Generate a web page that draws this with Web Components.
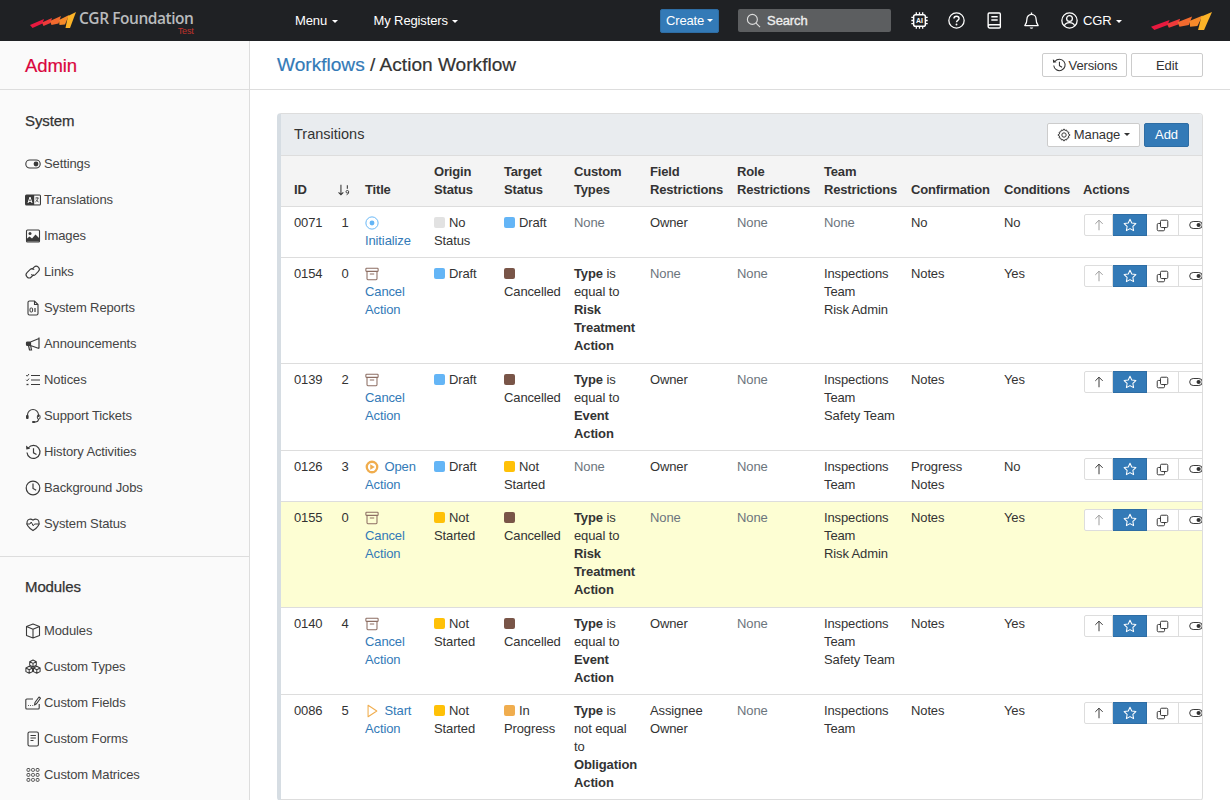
<!DOCTYPE html>
<html lang="en">
<head>
<meta charset="utf-8">
<title>Action Workflow</title>
<style>
  html, body { margin: 0; height: 100%; overflow: hidden; }
  body { font: 13px/18px "Liberation Sans", Arial, sans-serif; letter-spacing: -.12px; color: #333; background: #fff; }
  cgr-layout { height: 800px; }
</style>
</head>
<body>
<cgr-navbar></cgr-navbar>
<cgr-layout>
  <cgr-sidebar slot="side"></cgr-sidebar>
  <cgr-page-header slot="main"></cgr-page-header>
  <wf-panel slot="main" heading="Transitions">
    <wf-table></wf-table>
  </wf-panel>
</cgr-layout>

<script>
// all icons on a 16 box, drawn with currentColor
const ICONS = {
  toggle: '<rect x=".8" y="4" width="14.4" height="8" rx="4" fill="none" stroke="currentColor" stroke-width="1.1"/><circle cx="11" cy="8" r="2.4" fill="currentColor"/>',
  translate: '<rect x="0" y="2.5" width="16" height="11" rx="1.5" fill="currentColor"/><rect x="9.2" y="3.6" width="5.7" height="8.8" fill="#fafafa"/><path d="M3 11l2-6 2 6M3.8 9.4h2.4" fill="none" stroke="#fafafa" stroke-width="1"/><path d="M10.3 6h3.4M12 5v1M13 6c-.3 2-1.5 3.5-2.6 4M11 7.5c.5 1 1.3 2 2.6 2.5" fill="none" stroke="currentColor" stroke-width=".8"/>',
  image: '<rect x="1.5" y="2" width="13" height="12" rx="1" fill="none" stroke="currentColor" stroke-width="1.1"/><circle cx="5" cy="5.5" r="1.5" fill="currentColor"/><path d="M1.5 13.5V11l3-2.5 2.500 2 3.500-4 4 4v3z" fill="currentColor"/>',
  link: '<path d="M6.800 5.400l2.300-2.300a3 3 0 0 1 4.200 0l.1.1a3 3 0 0 1 0 4.200L10.500 10.300a3 3 0 0 1-4.200 0" fill="none" stroke="currentColor" stroke-width="1.1"/><path d="M9.200 5.700a3 3 0 0 0-4.200 0L2 8.700a3 3 0 0 0 0 4.200l.1.1a3 3 0 0 0 4.200 0l2.300-2.300" fill="none" stroke="currentColor" stroke-width="1.1"/>',
  report: '<path d="M4.500 1h5L13 4.500v9a1.500 1.500 0 0 1-1.500 1.500h-7A1.500 1.500 0 0 1 3 13.500v-11A1.500 1.500 0 0 1 4.500 1z" fill="none" stroke="currentColor" stroke-width="1.1"/><path d="M9.500 1v3.500H13" fill="none" stroke="currentColor" stroke-width="1.1"/><rect x="5" y="8" width="2.600" height="4" rx="1" fill="none" stroke="currentColor"/><path d="M10 8v4" stroke="currentColor" stroke-width="1.2"/>',
  megaphone: '<path d="M14 1.500v11M14 2.500L5.500 6h-3a1 1 0 0 0-1 1v1.500a1 1 0 0 0 1 1h3L14 12.500M5.500 6v3.500M3.500 9.500l1 4.500h2l-.8-4" fill="none" stroke="currentColor" stroke-width="1.2"/><rect x="2" y="6" width="3.500" height="3.500" fill="currentColor"/>',
  notices: '<path d="M6 3.500h9M6 8h9M6 12.500h9" stroke="currentColor" stroke-width="1.1"/><path d="M1.200 3.200l1 1L4 2M1.200 7.800l1 1L4 6.600" fill="none" stroke="currentColor" stroke-width="1"/><path d="M1.500 12.500h2" stroke="currentColor" stroke-width="1.3"/>',
  headset: '<path d="M2.500 9V7a5.500 5.500 0 0 1 11 0v2M13.500 11c0 1.800-1.500 3-3.500 3" fill="none" stroke="currentColor" stroke-width="1.1"/><rect x="1" y="7" width="2.600" height="4" rx="1" fill="currentColor"/><rect x="12.400" y="7" width="2.600" height="4" rx="1" fill="none" stroke="currentColor"/><rect x="7" y="13" width="3.400" height="2" rx="1" fill="currentColor"/>',
  history: '<path d="M3.300 4A6.500 6.500 0 1 1 2 8.500" fill="none" stroke="currentColor" stroke-width="1.2"/><path d="M8.500 4.200v4.600l3 1.700" fill="none" stroke="currentColor" stroke-width="1.2"/><path d="M1 1.500l.3 4 3.900-.7z" fill="currentColor"/>',
  clock: '<circle cx="8" cy="8" r="6.800" fill="none" stroke="currentColor" stroke-width="1.2"/><path d="M8 3.500v5l3.200 1.800" fill="none" stroke="currentColor" stroke-width="1.2"/>',
  heartpulse: '<path d="M8 14.500C-3 7.500 3.500 .5 8 4.200 12.500 .5 19 7.500 8 14.500z" fill="none" stroke="currentColor" stroke-width="1.1"/><path d="M1.500 8H5l1.200-2 2 3.800L9.500 8h5" fill="none" stroke="currentColor" stroke-width="1"/>',
  box: '<path d="M8 1l6.500 2.500v9L8 15l-6.500-2.500v-9zM1.500 3.500L8 6.200l6.500-2.700M8 6.200V15" fill="none" stroke="currentColor" stroke-width="1.1" stroke-linejoin="round"/>',
  boxes: '<g fill="none" stroke="currentColor" stroke-width="1.05" stroke-linejoin="round"><path d="M8 1l3.300 1.700v3.600L8 8 4.700 6.300V2.700zM4.700 2.700L8 4.400l3.300-1.700M8 4.400V8"/><path d="M4.200 7.300L7.500 9v3.600l-3.300 1.700L.9 12.600V9zM.9 9l3.300 1.700L7.500 9M4.200 10.700v3.600"/><path d="M11.800 7.300L15.100 9v3.600l-3.300 1.700-3.300-1.700V9zM8.500 9l3.300 1.700L15.100 9M11.800 10.700v3.600"/></g>',
  fields: '<path d="M8 4H1.800a1 1 0 0 0-1 1v8a1 1 0 0 0 1 1h11.400a1 1 0 0 0 1-1V9" fill="none" stroke="currentColor" stroke-width="1.1"/><path d="M3 10.500h.8M5.200 10.500H6M7.400 10.500h.8" stroke="currentColor" stroke-width="1.1"/><path d="M9.500 10l.5-2.500 4-5.500 1.500 1.200-4 5.500z" fill="none" stroke="currentColor" stroke-width="1.1" stroke-linejoin="round"/>',
  form: '<rect x="3" y="1" width="10.400" height="14" rx="1.500" fill="none" stroke="currentColor" stroke-width="1.1"/><path d="M5.500 4.500h5.400M5.500 7h5.400M5.500 9.500h3" stroke="currentColor" stroke-width="1"/>',
  matrix: '<g fill="none" stroke="currentColor" stroke-width=".9"><rect x="2" y="1.500" width="2.800" height="2.800" rx=".8"/><rect x="6.600" y="1.500" width="2.800" height="2.800" rx=".8"/><rect x="11.200" y="1.500" width="2.800" height="2.800" rx=".8"/><rect x="2" y="6.500" width="2.800" height="2.800" rx=".8"/><rect x="6.600" y="6.500" width="2.800" height="2.800" rx=".8"/><rect x="11.200" y="6.500" width="2.800" height="2.800" rx=".8"/><rect x="2" y="11.500" width="2.800" height="2.800" rx=".8"/><rect x="6.600" y="11.500" width="2.800" height="2.800" rx=".8"/><rect x="11.200" y="11.500" width="2.800" height="2.800" rx=".8"/></g>',
  archive: '<rect x="1" y="1.500" width="14" height="3.500" rx=".8" fill="none" stroke="currentColor" stroke-width="1.2"/><path d="M2.300 5v8.500a1 1 0 0 0 1 1h9.400a1 1 0 0 0 1-1V5M5.500 8h5" fill="none" stroke="currentColor" stroke-width="1.2"/>',
  record: '<circle cx="8" cy="8" r="7" fill="none" stroke="currentColor" stroke-width="1.1"/><circle cx="8" cy="8" r="2.800" fill="currentColor"/>',
  playfill: '<circle cx="8" cy="8" r="6" fill="none" stroke="currentColor" stroke-width="2.600"/><path d="M6 4.800v6.400L11.200 8z" fill="currentColor"/>',
  play: '<path d="M3.500 1.500v13L13.500 8z" fill="none" stroke="currentColor" stroke-width="1.2" stroke-linejoin="round"/>',
  gear: '<path d="M8 1l1 1.800 2-.5.6 2 2 .6-.5 2L15 8l-1.900 1.100.5 2-2 .6-.6 2-2-.5L8 15l-1-1.800-2 .5-.6-2-2-.6.5-2L1 8l1.900-1.100-.5-2 2-.6.6-2 2 .5z" fill="none" stroke="currentColor" stroke-width="1.1" stroke-linejoin="round"/><circle cx="8" cy="8" r="2.500" fill="none" stroke="currentColor" stroke-width="1.1"/>',
  star: '<path d="M8 1.500l2 4.300 4.700.6-3.400 3.300.8 4.700L8 12.100l-4.100 2.300.8-4.700L1.300 6.400 6 5.800z" fill="none" stroke="currentColor" stroke-width="1.2" stroke-linejoin="round"/>',
  copy: '<rect x="5.500" y="1.500" width="9" height="9" rx="1.500" fill="none" stroke="currentColor" stroke-width="1.2"/><path d="M5.500 5.500H3A1.500 1.500 0 0 0 1.500 7v6A1.500 1.500 0 0 0 3 14.500h6a1.500 1.500 0 0 0 1.500-1.500v-2.500" fill="none" stroke="currentColor" stroke-width="1.2"/>',
  up: '<path d="M8 14V2.500M3.800 6.700L8 2.500l4.200 4.200" fill="none" stroke="currentColor" stroke-width="1.1"/>',
  sort: '<path d="M4.500 2v11.500M1.800 10.800l2.700 2.700 2.700-2.700" fill="none" stroke="currentColor" stroke-width="1.2"/><path d="M11.800 2.500v4" stroke="currentColor" stroke-width="1.2"/><circle cx="11.800" cy="10" r="1.500" fill="none" stroke="currentColor"/><path d="M13.300 10c0 2-.8 3-2.300 3.500" fill="none" stroke="currentColor"/>',
  search: '<circle cx="6.800" cy="6.800" r="5.300" fill="none" stroke="currentColor" stroke-width="1.2"/><path d="M10.700 10.700l4.300 4.300" stroke="currentColor" stroke-width="1.2"/>',
  chip: '<rect x="2.500" y="2.500" width="11" height="11" rx="1.800" fill="none" stroke="currentColor" stroke-width="1.4"/><path d="M5 .3v2M8 .3v2M11 .3v2M5 13.700v2M8 13.700v2M11 13.700v2M.3 5h2M.3 8h2M.3 11h2M13.700 5h2M13.700 8h2M13.700 11h2" stroke="currentColor" stroke-width="1.2"/><text x="8" y="10.400" text-anchor="middle" font-family="Liberation Sans" font-size="6.500" font-weight="700" letter-spacing="0" fill="currentColor">AI</text>',
  help: '<circle cx="8" cy="8" r="7.200" fill="none" stroke="currentColor" stroke-width="1.2"/><path d="M5.600 6.200C5.600 4.800 6.700 4 8 4s2.400.8 2.400 2.100c0 1.700-2.400 1.800-2.400 3.500" fill="none" stroke="currentColor" stroke-width="1.3"/><circle cx="8" cy="11.800" r=".9" fill="currentColor"/>',
  book: '<path d="M3.500 1h9a1 1 0 0 1 1 1v12a1 1 0 0 1-1 1h-9A1.500 1.500 0 0 1 2 13.500V2a1 1 0 0 1 1-1zM2 13.500A1.500 1.500 0 0 1 3.500 12h10" fill="none" stroke="currentColor" stroke-width="1.3"/><path d="M5 4.500h6M5 7.500h6" stroke="currentColor" stroke-width="1.3"/>',
  bell: '<path d="M8 2.200A4.300 4.300 0 0 0 3.700 6.500c0 3.800-1.200 5.300-2 6.300h12.600c-.8-1-2-2.500-2-6.300A4.300 4.300 0 0 0 8 2.200z" fill="none" stroke="currentColor" stroke-width="1.2" stroke-linejoin="round"/><path d="M8 .5v1.700" stroke="currentColor" stroke-width="1.3"/><path d="M6.300 14.500a1.800 1.800 0 0 0 3.400 0z" fill="currentColor"/>',
  person: '<circle cx="8" cy="8" r="7.200" fill="none" stroke="currentColor" stroke-width="1.2"/><circle cx="8" cy="6.200" r="2.700" fill="none" stroke="currentColor" stroke-width="1.2"/><path d="M3.200 13c.6-2 2.500-3 4.800-3s4.200 1 4.800 3" fill="none" stroke="currentColor" stroke-width="1.2"/>'
};

class CgrIcon extends HTMLElement {
  connectedCallback() {
    const size = this.getAttribute("size") || 16;
    this.attachShadow({ mode: "open" }).innerHTML = `
      <style>
        :host { display: inline-block; width: ${size}px; height: ${size}px; line-height: 0; vertical-align: -3px; }
        svg { width: 100%; height: 100%; display: block; overflow: visible; }
      </style>
      <svg viewBox="0 0 16 16" aria-hidden="true">${ICONS[this.getAttribute("name")] || ""}</svg>`;
  }
}

// the stepped slash logo, red to yellow
class CgrLogo extends HTMLElement {
  connectedCallback() {
    const bars = [
      ["M0 13L14 7 12.500 11.500 2.500 16z", "#e8193f"],
      ["M12 10.500L22 6 20.500 11 13.500 14z", "#ee3a3a"],
      ["M20 9L31 4 28.500 11.500 21.500 13z", "#f26a2e"],
      ["M29 8L39 3 35 12.500 29.500 13z", "#f58a2a"],
      ["M38 4L46 0 40 16 35.500 16z", "#fbb327"]
    ];
    this.attachShadow({ mode: "open" }).innerHTML = `
      <style>
        :host { display: block; width: var(--logo-w, 46px); height: var(--logo-h, 16px); }
        svg { width: 100%; height: 100%; display: block; }
      </style>
      <svg viewBox="0 0 46 16" preserveAspectRatio="none">
        ${bars.map(([d, c]) => `<path d="${d}" fill="${c}"/>`).join("")}
      </svg>`;
  }
}

class CgrNavbar extends HTMLElement {
  connectedCallback() {
    this.attachShadow({ mode: "open" }).innerHTML = `
      <style>
        :host { display: flex; align-items: center; height: 41px; background: #1f2124; color: #fff; padding: 0 18px 0 30px; box-sizing: border-box; }
        .brand { display: flex; gap: 3px; width: 265px; align-items: flex-start; margin-top: -3px; }
        .brand cgr-logo { margin-top: 1px; }
        .name { font: 600 15.500px/15px "Open Sans", sans-serif; color: #b9bbbd; letter-spacing: -.45px; white-space: nowrap; position: relative; }
        .name small { position: absolute; right: 0; top: 15px; font: 9px/10px "Liberation Sans", sans-serif; letter-spacing: -.2px; color: #c0322b; }
        .menu { margin-right: 36px; white-space: nowrap; }
        .caret { display: inline-block; border: 3px solid transparent; border-top: 3.500px solid currentColor; border-bottom: 0; margin-left: 1px; vertical-align: 2px; }
        .end { margin-left: auto; display: flex; align-items: center; }
        .create { background: #337ab7; border: 1px solid #2e6da4; border-radius: 2px; height: 24px; width: 59px; box-sizing: border-box; display: flex; align-items: center; justify-content: center; gap: 3px; }
        .create .caret { margin-left: 0; vertical-align: 0; }
        .search { margin-left: 19px; width: 153px; height: 23px; background: #5c5e60; border-radius: 2px; display: flex; align-items: center; gap: 6px; padding-left: 8px; box-sizing: border-box; color: #eee; -webkit-text-stroke: .35px #eee; }
        .search cgr-icon { color: #ddd; -webkit-text-stroke: 0; }
        .icons { display: flex; margin-left: 20px; gap: 20.300px; align-items: center; }
        .user { display: flex; align-items: center; gap: 5px; margin-left: 21px; white-space: nowrap; }
        .end > cgr-logo { --logo-w: 61px; --logo-h: 18px; margin-left: 29px; }
      </style>
      <div class="brand">
        <cgr-logo></cgr-logo>
        <div class="name">CGR Foundation<small>Test</small></div>
      </div>
      <span class="menu">Menu <i class="caret"></i></span>
      <span class="menu">My Registers <i class="caret"></i></span>
      <div class="end">
        <span class="create">Create <i class="caret"></i></span>
        <div class="search"><cgr-icon name="search" size="15"></cgr-icon>Search</div>
        <div class="icons">
          <cgr-icon name="chip" size="17"></cgr-icon>
          <cgr-icon name="help" size="17"></cgr-icon>
          <cgr-icon name="book" size="17"></cgr-icon>
          <cgr-icon name="bell" size="17"></cgr-icon>
        </div>
        <div class="user"><cgr-icon name="person" size="17"></cgr-icon><span>CGR <i class="caret"></i></span></div>
        <cgr-logo></cgr-logo>
      </div>`;
  }
}

class CgrLayout extends HTMLElement {
  connectedCallback() {
    this.attachShadow({ mode: "open" }).innerHTML = `
      <style>
        :host { display: grid; grid-template-columns: 250px 1fr; overflow: hidden; }
        .main { min-width: 0; }
      </style>
      <slot name="side"></slot>
      <div class="main"><slot name="main"></slot></div>`;
  }
}

const SIDE_GROUPS = [
  ["System", [
    ["toggle", "Settings"], ["translate", "Translations"], ["image", "Images"], ["link", "Links"],
    ["report", "System Reports"], ["megaphone", "Announcements"], ["notices", "Notices"],
    ["headset", "Support Tickets"], ["history", "History Activities"], ["clock", "Background Jobs"],
    ["heartpulse", "System Status"]
  ]],
  ["Modules", [
    ["box", "Modules"], ["boxes", "Custom Types"], ["fields", "Custom Fields"],
    ["form", "Custom Forms"], ["matrix", "Custom Matrices"]
  ]]
];

class CgrSidebar extends HTMLElement {
  connectedCallback() {
    const groups = SIDE_GROUPS.map(([title, links]) => `
      <section>
        <h3>${title}</h3>
        ${links.map(([icon, text]) => `<a><cgr-icon name="${icon}"></cgr-icon>${text}</a>`).join("")}
      </section>`).join("");
    this.attachShadow({ mode: "open" }).innerHTML = `
      <style>
        :host { display: block; background: #fafafa; border-right: 1px solid #ddd; box-sizing: border-box; height: 759px; overflow: hidden; }
        h2 { margin: 0; height: 49px; box-sizing: border-box; padding-left: 25px; border-bottom: 1px solid #ddd; font: 18.500px/49px "Liberation Sans", sans-serif; color: #d9043d; -webkit-text-stroke: .2px #d9043d; }
        section { padding: 21px 25px 14px; border-bottom: 1px solid #ddd; }
        section:last-child { border-bottom: 0; padding-top: 20px; }
        section:last-child h3 { margin-bottom: 16px; }
        h3 { margin: 0 0 15px; font: 15px/20px "Liberation Sans", sans-serif; -webkit-text-stroke: .25px #333; }
        a { display: flex; align-items: center; height: 36px; gap: 3px; color: #444; white-space: nowrap; }
        a cgr-icon { color: #3a3a3a; }
      </style>
      <h2>Admin</h2>
      ${groups}`;
  }
}

class CgrPageHeader extends HTMLElement {
  connectedCallback() {
    this.attachShadow({ mode: "open" }).innerHTML = `
      <style>
        :host { display: flex; align-items: center; height: 48px; padding: 0 27px; border-bottom: 1px solid #ddd; }
        h1 { margin: 0 auto 0 0; font: 19.100px/24px "Liberation Sans", sans-serif; letter-spacing: 0; color: #333; -webkit-text-stroke: .2px #333; }
        h1 a { color: #337ab7; -webkit-text-stroke: .2px #337ab7; }
        button { font: 13px "Liberation Sans", sans-serif; letter-spacing: -.12px; color: #333; background: #fff; border: 1px solid #ccc; border-radius: 2px; height: 24px; padding: 0; margin-left: 4px; display: flex; align-items: center; justify-content: center; gap: 3px; }
        .versions { width: 85px; }
        .edit { width: 72px; }
      </style>
      <h1><a>Workflows</a> / Action Workflow</h1>
      <button class="versions"><cgr-icon name="history" size="14"></cgr-icon>Versions</button>
      <button class="edit">Edit</button>`;
  }
}

class WfPanel extends HTMLElement {
  connectedCallback() {
    this.attachShadow({ mode: "open" }).innerHTML = `
      <style>
        :host { display: block; margin: 23px 27px 0; border: 1px solid #ddd; border-left: 4px solid #d6dde3; border-radius: 4px; overflow: hidden; }
        header { display: flex; align-items: center; height: 41px; padding: 0 13px; background: #e9ecef; border-bottom: 1px solid #ddd; }
        .title { margin-right: auto; margin-top: -2px; font-size: 14.500px; letter-spacing: 0; }
        button { font: 13px "Liberation Sans", sans-serif; letter-spacing: -.12px; height: 24px; box-sizing: border-box; border-radius: 2px; padding: 0; display: flex; align-items: center; justify-content: center; }
        .manage { width: 93px; background: #fff; color: #333; border: 1px solid #ccc; gap: 3px; }
        .add { width: 45px; margin-left: 4px; background: #337ab7; color: #fff; border: 1px solid #2e6da4; }
        .caret { display: inline-block; border: 3px solid transparent; border-top: 3.500px solid currentColor; border-bottom: 0; margin-left: 1px; }
      </style>
      <header>
        <span class="title">${this.getAttribute("heading")}</span>
        <button class="manage"><cgr-icon name="gear" size="14"></cgr-icon>Manage <i class="caret"></i></button>
        <button class="add">Add</button>
      </header>
      <slot></slot>`;
  }
}

class WfStatus extends HTMLElement {
  connectedCallback() {
    this.attachShadow({ mode: "open" }).innerHTML = `
      <style>
        :host { display: inline; }
        i { display: inline-block; width: 11px; height: 11px; border-radius: 2px; margin-right: 4px; background: ${this.getAttribute("color")}; vertical-align: -1px; }
      </style>
      <i></i><slot></slot>`;
  }
}

class WfActions extends HTMLElement {
  connectedCallback() {
    const off = this.hasAttribute("first");
    this.attachShadow({ mode: "open" }).innerHTML = `
      <style>
        :host { display: flex; height: 22px; }
        span { display: flex; align-items: center; justify-content: center; box-sizing: border-box; height: 22px; border: 1px solid #ddd; border-left: 0; background: #fff; color: #333; flex: none; }
        .up { width: 29px; border-left: 1px solid #ddd; color: ${off ? "#999" : "#333"}; border-radius: 2px 0 0 2px; }
        .star { width: 34px; background: #337ab7; border-color: #2e6da4; color: #fff; }
        .copy { width: 32px; }
        .toggle { width: 32px; justify-content: flex-start; padding-left: 10px; }
      </style>
      <span class="up"><cgr-icon name="up" size="14"></cgr-icon></span>
      <span class="star"><cgr-icon name="star" size="14"></cgr-icon></span>
      <span class="copy"><cgr-icon name="copy" size="13"></cgr-icon></span>
      <span class="toggle"><cgr-icon name="toggle" size="14"></cgr-icon></span>`;
  }
}

const STATUS = {
  none: ["#e2e2e2", "No Status"],
  draft: ["#64b5f6", "Draft"],
  cancelled: ["#795548", "Cancelled"],
  notStarted: ["#ffc107", "Not Started"],
  progress: ["#f0ad4e", "In Progress"]
};
const CANCEL = ["archive", "#8d6e63", "Cancel Action"];
// line breaks as the narrow column wraps them
const RISK = "<b>Type</b> is<br>equal to<br><b>Risk<br>Treatment<br>Action</b>";
const EVENT = "<b>Type</b> is<br>equal to<br><b>Event<br>Action</b>";
const NONE = '<span class="none">None</span>';
const TEAM = "Inspections Team";

const ROWS = [
  { id: "0071", ord: 1, title: ["record", "#64b5f6", "Initialize"], from: "none", to: "draft", types: NONE, field: "Owner", team: NONE, conf: "No", cond: "No", first: true },
  { id: "0154", ord: 0, title: CANCEL, from: "draft", to: "cancelled", types: RISK, field: NONE, team: `${TEAM}<br>Risk Admin`, conf: "Notes", cond: "Yes", first: true, tall: true },
  { id: "0139", ord: 2, title: CANCEL, from: "draft", to: "cancelled", types: EVENT, field: "Owner", team: `${TEAM}<br>Safety Team`, conf: "Notes", cond: "Yes" },
  { id: "0126", ord: 3, title: ["playfill", "#f0ad4e", "Open Action"], from: "draft", to: "notStarted", types: NONE, field: "Owner", team: TEAM, conf: "Progress Notes", cond: "No" },
  { id: "0155", ord: 0, title: CANCEL, from: "notStarted", to: "cancelled", types: RISK, field: NONE, team: `${TEAM}<br>Risk Admin`, conf: "Notes", cond: "Yes", first: true, mark: true, tall: true },
  { id: "0140", ord: 4, title: CANCEL, from: "notStarted", to: "cancelled", types: EVENT, field: "Owner", team: `${TEAM}<br>Safety Team`, conf: "Notes", cond: "Yes" },
  { id: "0086", ord: 5, title: ["play", "#f0ad4e", "Start Action"], from: "notStarted", to: "progress", types: "<b>Type</b> is<br>not equal<br>to<br><b>Obligation<br>Action</b>", field: "Assignee<br>Owner", team: TEAM, conf: "Notes", cond: "Yes" }
];

class WfTable extends HTMLElement {
  connectedCallback() {
    const widths = [48, 28, 69, 70, 70, 76, 87, 87, 87, 93, 79, 128];
    const heads = ["ID", '<cgr-icon name="sort" size="14"></cgr-icon>', "Title", "Origin Status", "Target Status", "Custom Types",
      "Field Restrictions", "Role Restrictions", "Team Restrictions", "Confirmation", "Conditions", "Actions"];
    const status = key => `<wf-status color="${STATUS[key][0]}">${STATUS[key][1]}</wf-status>`;
    const rows = ROWS.map(r => `
      <tr class="${r.mark ? "mark" : ""} ${r.tall ? "tall" : ""}">
        <td>${r.id}</td>
        <td class="ord">${r.ord}</td>
        <td><a><span style="color:${r.title[1]}"><cgr-icon name="${r.title[0]}" size="14"></cgr-icon></span> ${r.title[2]}</a></td>
        <td>${status(r.from)}</td>
        <td>${status(r.to)}</td>
        <td>${r.types}</td>
        <td>${r.field}</td>
        <td>${NONE}</td>
        <td>${r.team}</td>
        <td>${r.conf}</td>
        <td>${r.cond}</td>
        <td class="act"><wf-actions ${r.first ? "first" : ""}></wf-actions></td>
      </tr>`).join("");
    this.attachShadow({ mode: "open" }).innerHTML = `
      <style>
        :host { display: block; overflow: hidden; }
        table { table-layout: fixed; border-collapse: separate; border-spacing: 0; width: 922px; }
        th, td { padding: 7px 6px 7px 8px; text-align: left; vertical-align: top; border-bottom: 1px solid #ddd; overflow: hidden; }
        th { vertical-align: bottom; background: #f4f4f4; font-weight: 700; letter-spacing: -.17px; }
        th:first-child, td:first-child { padding-left: 13px; padding-right: 0; }
        .ord { text-align: center; padding-left: 6px; padding-right: 2px; }
        th:nth-child(2) { text-align: center; padding-left: 4px; padding-right: 3px; }
        .tall td { padding-bottom: 8px; }
        .mark td { background: #fdfed3; }
        a { color: #337ab7; }
        a span { margin-right: 2px; }
        .none { color: #6c757d; }
        td.act { padding: 7px 0 0 9px; overflow: hidden; white-space: nowrap; }
      </style>
      <table>
        <colgroup>${widths.map(w => `<col style="width:${w}px">`).join("")}</colgroup>
        <thead><tr>${heads.map(h => `<th>${h}</th>`).join("")}</tr></thead>
        <tbody>${rows}</tbody>
      </table>`;
  }
}

customElements.define("cgr-icon", CgrIcon);
customElements.define("cgr-logo", CgrLogo);
customElements.define("cgr-navbar", CgrNavbar);
customElements.define("cgr-layout", CgrLayout);
customElements.define("cgr-sidebar", CgrSidebar);
customElements.define("cgr-page-header", CgrPageHeader);
customElements.define("wf-panel", WfPanel);
customElements.define("wf-status", WfStatus);
customElements.define("wf-actions", WfActions);
customElements.define("wf-table", WfTable);
</script>
</body>
</html>
